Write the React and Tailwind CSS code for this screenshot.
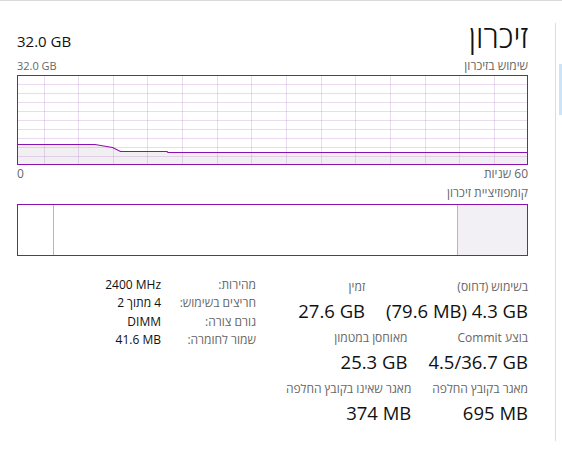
import React from "react";

const PURPLE = "#8b12ae";

function UsageGraph() {
  const W = 511;
  const H = 90;
  const vlines = [];
  for (let k = 0; k < 14; k++) vlines.push(26.5 + k * 34.65);
  const hlines = [];
  for (let k = 1; k < 10; k++) hlines.push(k * 9 + 0.5);
  const pts = "0,69.5 78,69.5 95.5,72.5 103.5,76.5 150,76.5 151,77.5 511,77.5";
  return (
    <svg width={W} height={H} viewBox={`0 0 ${W} ${H}`} className="block">
      <rect x="0" y="0" width={W} height={H} fill="#ffffff" />
      <polygon points={`${pts} 511,90 0,90`} fill="#f2eff3" />
      {vlines.map((x, i) => (
        <line key={"v" + i} x1={Math.round(x) + 0.5} y1="0" x2={Math.round(x) + 0.5} y2={H} stroke="#b87ccc" strokeOpacity="0.28" strokeWidth="1" />
      ))}
      {hlines.map((y, i) => (
        <line key={"h" + i} x1="0" y1={y} x2={W} y2={y} stroke="#b87ccc" strokeOpacity="0.28" strokeWidth="1" />
      ))}
      <polyline points={pts} fill="none" stroke={PURPLE} strokeWidth="1.2" />
      <rect x="0.5" y="0.5" width={W - 1} height={H - 1} fill="none" stroke={PURPLE} strokeWidth="1" />
    </svg>
  );
}

function Stat({ label, value }) {
  return (
    <div className="flex flex-col">
      <div className="h-[18px] text-[12px] leading-[18px] text-[#666666] whitespace-nowrap">{label}</div>
      <div className="h-[33px] text-[18.5px] leading-[30px] text-[#111111] whitespace-nowrap">
        <span dir="ltr">{value}</span>
      </div>
    </div>
  );
}

export default function App() {
  return (
    <div className="w-[562px] h-[453px] bg-white border-t border-[#d9d9d9] flex overflow-hidden font-['Open_Sans','Liberation_Sans','DejaVu_Sans',sans-serif]">
      <div className="w-[555px] pl-[17px] pr-[27px] flex flex-col">
        <div dir="rtl" className="mt-[18px] h-[40px] flex items-start justify-between">
          <div className="text-[31px] leading-[34px] font-light text-[#111111]">זיכרון</div>
          <div dir="ltr" className="mt-[12px] text-[15px] leading-[20px] text-[#111111]">32.0 GB</div>
        </div>
        <div dir="rtl" className="h-[16px] flex items-start justify-between">
          <div className="text-[12px] leading-[14px] text-[#666666]">שימוש בזיכרון</div>
          <div dir="ltr" className="text-[11px] leading-[14px] text-[#666666]">32.0 GB</div>
        </div>
        <UsageGraph />
        <div dir="rtl" className="h-[18px] flex items-start justify-between text-[12px] leading-[18px] text-[#666666]">
          <div>60 שניות</div>
          <div>0</div>
        </div>
        <div dir="rtl" className="h-[21px] text-[12px] leading-[19px] text-[#666666]">קומפוזיציית זיכרון</div>
        <div className="h-[52px] border border-[#8b12ae] flex">
          <div className="w-[36px] border-r border-[#cfa3df]" />
          <div className="flex-1" />
          <div className="w-[70px] border-l border-[#cfa3df] bg-[#f2f0f4]" />
        </div>
        <div dir="rtl" className="mt-[20px] flex items-start gap-[12px]">
          <div className="w-[260px] shrink-0 pt-[2px] flex flex-col">
            <div className="flex gap-[21px]">
              <Stat label="בשימוש (דחוס)" value="(79.6 MB) 4.3 GB" />
              <Stat label="זמין" value="27.6 GB" />
            </div>
            <div className="flex gap-[21px]">
              <Stat label="בוצע Commit" value="4.5/36.7 GB" />
              <Stat label="מאוחסן במטמון" value="25.3 GB" />
            </div>
            <div className="flex gap-[21px]">
              <Stat label="מאגר בקובץ החלפה" value="695 MB" />
              <Stat label="מאגר שאינו בקובץ החלפה" value="374 MB" />
            </div>
          </div>
          <div className="grid grid-cols-[81px_auto] gap-x-[14px] text-[12px] leading-[18.33px] whitespace-nowrap">
            <div className="text-[#666666]">מהירות:</div>
            <div className="text-[#111111]"><span dir="ltr">2400 MHz</span></div>
            <div className="text-[#666666]">חריצים בשימוש:</div>
            <div dir="ltr" className="text-[#111111] flex justify-end gap-[3px]">
              <span>2</span>
              <span dir="rtl">מתוך</span>
              <span>4</span>
            </div>
            <div className="text-[#666666]">גורם צורה:</div>
            <div className="text-[#111111]"><span dir="ltr">DIMM</span></div>
            <div className="text-[#666666]">שמור לחומרה:</div>
            <div className="text-[#111111]"><span dir="ltr">41.6 MB</span></div>
          </div>
        </div>
      </div>
      <div className="flex">
        <div className="w-px mt-[22px] h-[418px] bg-[#dcdcdc]" />
        <div className="w-[3px] ml-[3px] mt-[63px] h-[51px] bg-[#cce4f7]" />
      </div>
    </div>
  );
}
